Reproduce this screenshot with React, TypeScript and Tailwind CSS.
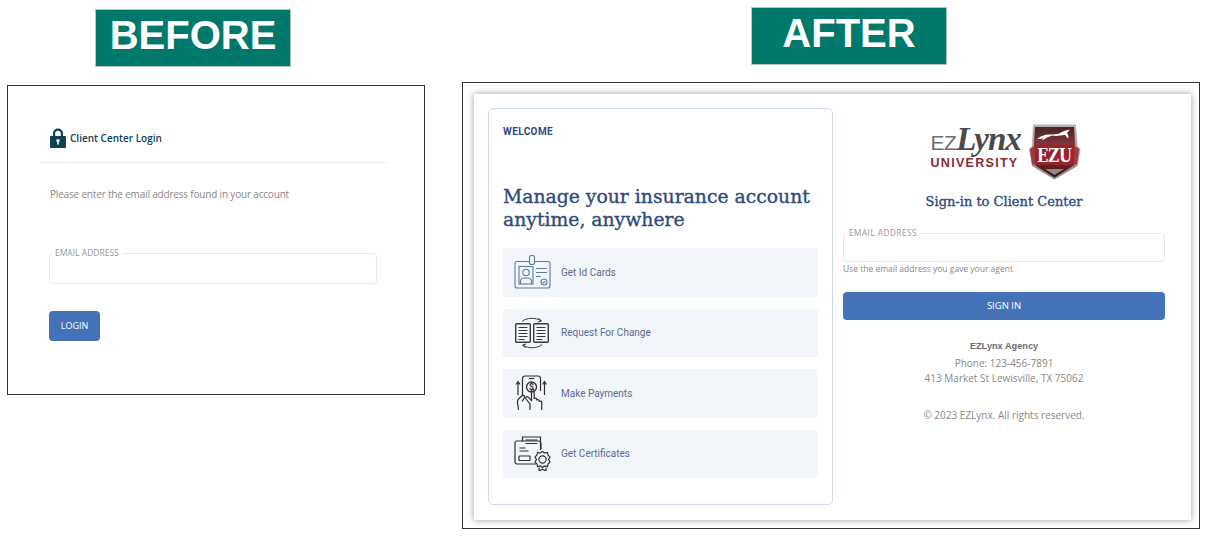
const sans = "font-['Open_Sans',sans-serif]";
const roboto = "font-['Roboto',sans-serif]";
const slab = "font-['DejaVu_Serif',serif] [-webkit-text-stroke:0.35px_#2f4a7c]";

function LockIcon() {
  return (
    <svg width="16" height="20" viewBox="0 0 16 20" className="shrink-0">
      <path d="M3 9V5.500a5 5 0 0 1 10 0V9h-2.200V5.500a2.800 2.800 0 0 0-5.600 0V9z" fill="#0e4058" />
      <rect x="0" y="8" width="16" height="12" rx="1" fill="#0e4058" />
      <circle cx="8" cy="12.600" r="1.700" fill="#fff" />
      <rect x="7.200" y="13" width="1.600" height="3.600" fill="#fff" />
    </svg>
  );
}

function IdCardIcon() {
  return (
    <svg width="37" height="34" viewBox="0 0 37 34" fill="none" stroke="#5f7aa6" strokeWidth="1.100">
      <rect x="1" y="6.500" width="35" height="26.500" rx="2" />
      <rect x="15.500" y="0.500" width="5" height="9" rx="2" fill="#f2f5fa" />
      <rect x="5" y="11.500" width="14" height="17.500" />
      <circle cx="12" cy="17.500" r="3.200" />
      <path d="M6.500 29v-3c0-2 2.500-3 5.500-3s5.500 1 5.500 3v3" />
      <path d="M22 13.500h11M22 17.500h11M22 21.500h5" />
      <circle cx="30" cy="27" r="3" />
      <path d="M28.700 27l1 1 1.700-1.900" />
    </svg>
  );
}

function ChangeIcon() {
  return (
    <svg width="34" height="32" viewBox="0 0 34 32" fill="none" stroke="#3a3a3a" strokeWidth="1">
      <rect x="0.700" y="6.700" width="14.600" height="18.600" rx="1" strokeWidth="1.400" />
      <rect x="18.700" y="6.700" width="14.600" height="18.600" rx="1" strokeWidth="1.400" />
      <path d="M3.500 10.500h9M3.500 13.500h9M3.500 16.500h9M3.500 19.500h9M3.500 22.500h6M21.500 10.500h9M21.500 13.500h9M21.500 16.500h9M21.500 19.500h9M21.500 22.500h6" />
      <path d="M7 4.500C11 .500 21 .300 26 3.800" />
      <path d="M23.500 1l3 3-3.600 1" />
      <path d="M27 27.500c-4 4-14 4.300-19 .800" />
      <path d="M10.500 31l-3-3 3.600-1" />
    </svg>
  );
}

function PaymentIcon() {
  return (
    <svg width="35" height="36" viewBox="0 0 35 36" fill="none" stroke="#2f2f2f" strokeWidth="1.200">
      <path d="M7.500 20V3.500A2.500 2.500 0 0 1 10 1h13a2.500 2.500 0 0 1 2.500 2.500V16" />
      <path d="M14 3.500h5" />
      <circle cx="16.500" cy="12" r="5" strokeWidth="1.300" />
      <text x="16.500" y="15" textAnchor="middle" fontSize="8.500" fontWeight="700" fill="#2f2f2f" stroke="none" fontFamily="Roboto, sans-serif">$</text>
      <path d="M3 20V7M1 9.500l2-3 2 3M29.500 20V7M27.500 9.500l2-3 2 3" />
      <path d="M3.500 35c0-4-1.500-6-1-9 .500-2.500 3.500-4 5-5.500 1-.800 3 .800 2 2.200L7 26.500" />
      <path d="M15 35v-6l-4-5c-1-1.500 1-3 2.200-1.800l3.300 3.300V15.500c0-1.600 2.700-1.600 2.700 0V24c0-1.300 2.500-1.300 2.500 0v1.500c0-1.300 2.500-1.300 2.500 0V27c0-1.200 2.500-1.200 2.500 0v8" />
    </svg>
  );
}

function CertificateIcon() {
  return (
    <svg width="37" height="35" viewBox="0 0 37 35" fill="none" stroke="#2f2f2f" strokeWidth="1.200">
      <path d="M8.500 5.500V1h18v13" />
      <path d="M11.500 4h12M11.500 7.500h12" />
      <path d="M22 28H3a2 2 0 0 1-2-2V7a2 2 0 0 1 2-2h21a3 3 0 0 1 3 3v5" />
      <path d="M5.500 12h6M5.500 15h9" />
      <rect x="5" y="20" width="11" height="4.500" rx="0.500" />
      <path d="M28.500 15.500l2.500 1.500 2.500-.500.500 2.500 2 2-1.500 2.500 1.500 2.500-2 2-.500 2.500-2.500-.500-2.500 1.500-2.500-1.500-2.500.500-.500-2.500-2-2 1.500-2.500-1.500-2.500 2-2 .500-2.500 2.500.500z" />
      <circle cx="28.500" cy="23.500" r="3.600" />
      <path d="M25 31.500V35l3.500-1.800L32 35v-3.500" />
    </svg>
  );
}

function ShieldLogo() {
  return (
    <svg width="53" height="57" viewBox="0 0 53 57" className="shrink-0">
      <defs>
        <linearGradient id="rim" x1="0" y1="0" x2="0" y2="1">
          <stop offset="0" stopColor="#b9b4b1" />
          <stop offset="1" stopColor="#8f8a88" />
        </linearGradient>
        <linearGradient id="top" x1="0" y1="0" x2="0" y2="1">
          <stop offset="0" stopColor="#4a2225" />
          <stop offset="1" stopColor="#8a3a3f" />
        </linearGradient>
        <linearGradient id="base" x1="0" y1="0" x2="0" y2="1">
          <stop offset="0" stopColor="#6b2327" />
          <stop offset="1" stopColor="#2e1416" />
        </linearGradient>
      </defs>
      <path d="M5 1.500h43l1.500 22 3 2.500-3 17L26.500 56.500 4 43 1 26l3-2.500z" fill="url(#rim)" />
      <path d="M7 4h39l1.200 20H5.800z" fill="url(#top)" />
      <path d="M9 16c4-3.500 9-5 14-4.500 5 .200 9-1 13-3.500l6-1.500-3 3.500c1 1.500 2 3.500 1 5.500l-3-3.500c-4 .500-9 1.500-13 .500-3 1-7 3-9 4.500l-1-1 3-2.500-4 2.500z" fill="#ffffff" />
      <path d="M7 41h39l-1 2-18.500 11.500L8 43z" fill="url(#base)" />
      <path d="M2 26l5-3.500V42l-3-1zM51 26l-5-3.500V42l3-1z" fill="#a8353c" />
      <rect x="7" y="21.500" width="39" height="20.500" fill="#96242b" />
      <text x="26.500" y="39" textAnchor="middle" fontSize="19" fontWeight="700" fill="#fff" fontFamily="'DejaVu Serif', serif" textLength="35" lengthAdjust="spacingAndGlyphs">EZU</text>
      <path d="M17 46h19l-9.500 6z" fill="#8f8a88" />
    </svg>
  );
}

const rows = [
  { label: "Get Id Cards", icon: <IdCardIcon /> },
  { label: "Request For Change", icon: <ChangeIcon /> },
  { label: "Make Payments", icon: <PaymentIcon /> },
  { label: "Get Certificates", icon: <CertificateIcon /> },
];

function Badge({ label }: { label: string }) {
  return (
    <div className="w-[196px] h-[58px] pb-[6px] bg-[#00796b] border border-[#b5c4c0] flex items-center justify-center text-white text-[40px] font-bold font-['Liberation_Sans',sans-serif]">
      {label}
    </div>
  );
}

function BeforePanel() {
  return (
    <div className="w-[418px] h-[310px] border border-[#333] pl-[32px] pr-[37px] pt-[41px] bg-white">
      <div className="flex items-center gap-[4px] pl-[10px] h-[22px]">
        <LockIcon />
        <span className={`${sans} text-[10px] font-semibold text-[#0e4058]`}>Client Center Login</span>
      </div>
      <div className="mt-[13px] border-t border-[#eeeeee]" />
      <p className={`${sans} mt-[24px] pl-[10px] text-[10px] leading-[14px] tracking-[-0.18px] text-[#8d8785]`}>
        Please enter the email address found in your account
      </p>
      <div className="relative mt-[52px] ml-[9px] w-[328px] h-[31px] border border-[#e8e8e8] rounded-[4px]">
        <span className={`${sans} absolute -top-[6px] left-[2px] bg-white px-[3px] text-[8.500px] leading-[10px] text-[#999693]`}>
          EMAIL ADDRESS
        </span>
      </div>
      <button className={`${sans} mt-[27px] ml-[9px] block w-[51px] h-[30px] bg-[#4472b8] rounded-[4px] text-white text-[9px]`}>
        LOGIN
      </button>
    </div>
  );
}

function AfterPanel() {
  return (
    <div className="w-[738px] h-[447px] border border-[#333] p-[11px] bg-white">
      <div className="w-[717px] h-[426px] bg-white shadow-[0_0_7px_rgba(0,0,0,0.4)] p-[14px] flex">
        <div className="w-[345px] h-[397px] border border-[#cfdcee] rounded-[5px] px-[14px] pt-[16px]">
          <div className={`${roboto} text-[10px] leading-[14px] font-bold tracking-[0.4px] text-[#2f4a7c]`}>WELCOME</div>
          <h1 className={`${slab} mt-[46px] text-[18.800px] leading-[23px] text-[#2f4a7c]`}>
            Manage your insurance account
            <br />
            anytime, anywhere
          </h1>
          <div className="mt-[17px] flex flex-col gap-[12px]">
            {rows.map((row) => (
              <div key={row.label} className="h-[48.500px] bg-[#f2f5fa] rounded-[3px] flex items-center pl-[10px]">
                <div className="w-[38px] flex justify-center">{row.icon}</div>
                <span className={`${roboto} ml-[10px] text-[10px] text-[#5a6c8c]`}>{row.label}</span>
              </div>
            ))}
          </div>
        </div>
        <div className="ml-[10px] w-[322px] flex flex-col items-center pt-[14px]">
          <div className="flex items-center h-[58px] gap-[9px]">
            <div className="flex flex-col items-start w-[91px] pl-[3px] pb-[8px]">
              <div className="flex items-baseline h-[30px] leading-[26px]">
                <span className="font-['Liberation_Sans',sans-serif] text-[21px] text-[#6f6f6f] tracking-[-0.5px]">EZ</span>
                <span className="font-['Liberation_Serif',serif] italic font-bold text-[33px] text-[#4a4a4a] tracking-[-1px]">Lynx</span>
              </div>
              <span className="mt-[1px] font-['Liberation_Sans',sans-serif] text-[12.500px] leading-[12px] font-bold tracking-[1.3px] text-[#8c2a30]">UNIVERSITY</span>
            </div>
            <ShieldLogo />
          </div>
          <h2 className={`${slab} mt-[13px] text-[13px] leading-[18px] text-[#2f4a7c] [-webkit-text-stroke:0.2px_#2f4a7c]`}>Sign-in to Client Center</h2>
          <div className="relative mt-[22px] w-full h-[29px] border border-[#e8e8e8] rounded-[4px]">
            <span className={`${sans} absolute -top-[6px] left-[2px] bg-white px-[3px] text-[8.200px] leading-[10px] tracking-[0.5px] text-[#999693]`}>
              EMAIL ADDRESS
            </span>
          </div>
          <p className={`${sans} self-start mt-[1px] text-[8.500px] leading-[12px] text-[#8d8785]`}>Use the email address you gave your agent</p>
          <button className={`${sans} mt-[17px] w-full h-[28px] bg-[#4472b8] rounded-[4px] text-white text-[9.500px]`}>
            SIGN IN
          </button>
          <div className="mt-[20px] font-['Liberation_Sans',sans-serif] font-bold text-[9.200px] leading-[12px] text-[#6f6b6a]">EZLynx Agency</div>
          <div className={`${sans} mt-[4px] text-[10px] leading-[15px] text-[#8d8785] text-center`}>
            Phone: 123-456-7891
            <br />
            413 Market St Lewisville, TX 75062
          </div>
          <div className={`${sans} mt-[22px] text-[10px] leading-[14px] text-[#8d8785]`}>© 2023 EZLynx. All rights reserved.</div>
        </div>
      </div>
    </div>
  );
}

export default function App() {
  return (
    <div className="w-[1206px] h-[539px] bg-white flex items-start pl-[7px] overflow-hidden">
      <div className="w-[418px] pt-[9px] flex flex-col">
        <div className="ml-[88px]">
          <Badge label="BEFORE" />
        </div>
        <div className="mt-[18px]">
          <BeforePanel />
        </div>
      </div>
      <div className="ml-[37px] w-[738px] pt-[7px] flex flex-col">
        <div className="ml-[289px]">
          <Badge label="AFTER" />
        </div>
        <div className="mt-[17px]">
          <AfterPanel />
        </div>
      </div>
    </div>
  );
}
